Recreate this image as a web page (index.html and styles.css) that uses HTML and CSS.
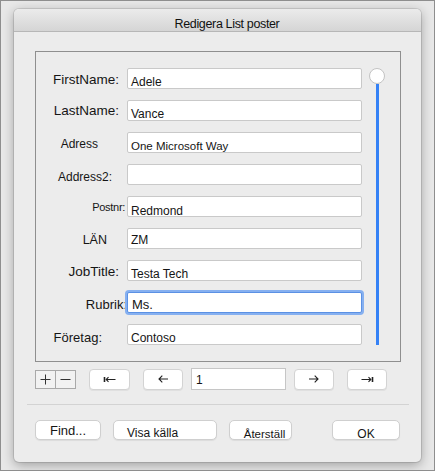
FILE: index.html
```html
<!DOCTYPE html>
<html>
<head>
<meta charset="utf-8">
<link rel="stylesheet" href="styles.css">
</head>
<body>
<div class="dialog">
  <div class="titlebar"><div class="title">Redigera List poster</div></div>
  <div class="panel">
    <div class="form">
      <div class="label l-first">FirstName:</div><div class="field">Adele</div>
      <div class="label l-last">LastName:</div><div class="field">Vance</div>
      <div class="label l-adress">Adress</div><div class="field f-small">One Microsoft Way</div>
      <div class="label l-adress2">Address2:</div><div class="field"></div>
      <div class="label l-postnr">Postnr:</div><div class="field f-low">Redmond</div>
      <div class="label l-lan">LÄN</div><div class="field f-high">ZM</div>
      <div class="label l-job">JobTitle:</div><div class="field">Testa Tech</div>
      <div class="label l-rubrik">Rubrik:</div><div class="field focused">Ms.</div>
      <div class="label l-foretag">Företag:</div><div class="field">Contoso</div>
    </div>
    <div class="slider"><div class="knob"></div><div class="track"></div></div>
  </div>
  <div class="nav">
    <div class="pm">
      <span><svg width="11" height="11" viewBox="0 0 11 11"><path d="M5.5 0.5v10M0.5 5.5h10" stroke="#333" stroke-width="1" fill="none"/></svg></span>
      <span><svg width="11" height="11" viewBox="0 0 11 11"><path d="M0.5 5.5h10" stroke="#333" stroke-width="1" fill="none"/></svg></span>
    </div>
    <div class="nbtn nb1"><svg width="13" height="7" viewBox="0 0 13 7"><path d="M1.5 1v5" stroke="#222" stroke-width="1.6" fill="none"/><path d="M3 3.5h9.5M5.5 1.2L3.2 3.5l2.3 2.3" stroke="#222" stroke-width="1.1" fill="none"/></svg></div>
    <div class="nbtn nb2"><svg width="10" height="8" viewBox="0 0 10 8"><path d="M1 4h9M4.3 0.7L1 4l3.3 3.3" stroke="#222" stroke-width="1.1" fill="none"/></svg></div>
    <div class="numfield">1</div>
    <div class="nbtn nb3"><svg width="10" height="8" viewBox="0 0 10 8"><path d="M0 4h9M5.7 0.7L9 4 5.7 7.3" stroke="#222" stroke-width="1.1" fill="none"/></svg></div>
    <div class="nbtn nb4"><svg width="13" height="7" viewBox="0 0 13 7"><path d="M11.5 1v5" stroke="#222" stroke-width="1.6" fill="none"/><path d="M0.5 3.5H10M7.5 1.2l2.3 2.3-2.3 2.3" stroke="#222" stroke-width="1.1" fill="none"/></svg></div>
  </div>
  <div class="sep"></div>
  <div class="actions">
    <div class="btn b-find">Find...</div>
    <div class="btn b-visa">Visa källa</div>
    <div class="btn b-reset">Återställ</div>
    <div class="btn b-ok">OK</div>
  </div>
</div>
</body>
</html>
```
FILE: styles.css
```css
* { box-sizing: border-box; }
html, body { margin: 0; }
body {
  width: 435px;
  height: 471px;
  border: 1px solid #8e8e8e;
  background: #e8e8e8;
  padding: 8px 0 0 13px;
  font-family: "Liberation Sans", Arial, sans-serif;
  color: #151515;
  overflow: hidden;
}
.dialog {
  width: 407px;
  height: 453px;
  background: #ececec;
  border-radius: 5px;
  box-shadow: 0 0 0 1px rgba(0,0,0,0.10), 0 3px 12px rgba(0,0,0,0.32);
  display: flex;
  flex-direction: column;
  overflow: hidden;
}
.titlebar {
  height: 23px;
  border-bottom: 1px solid #b7b7b7;
  background: linear-gradient(#ebebeb, #d5d5d5);
  padding: 8px 0 0 19px;
  text-align: center;
}
.title {
  font-size: 12.5px;
  line-height: 14px;
  letter-spacing: -0.35px;
  color: #111;
}
.panel {
  margin: 19px 0 0 21px;
  width: 366px;
  height: 311px;
  border: 1px solid #8f8f8f;
  display: flex;
  align-items: flex-start;
  padding-top: 16px;
}
.form {
  display: grid;
  grid-template-columns: 91px 235px;
  grid-auto-rows: 21px;
  row-gap: 11px;
}
.label {
  text-align: right;
  white-space: nowrap;
  font-size: 12px;
  line-height: 21px;
}
.l-first { font-size: 13.5px; padding-right: 8px; padding-top: 1px; }
.l-last { font-size: 13.5px; padding-right: 8px; }
.l-adress { padding-right: 29px; padding-top: 2px; }
.l-adress2 { padding-right: 15px; padding-top: 3px; }
.l-postnr { font-size: 11px; letter-spacing: -0.3px; padding-right: 2px; padding-top: 1px; }
.l-lan { font-size: 12.5px; padding-right: 20px; padding-top: 2px; }
.l-job { font-size: 13.5px; padding-right: 8px; padding-top: 1px; }
.l-rubrik { font-size: 13px; padding-right: 0; padding-top: 2px; }
.l-foretag { font-size: 13px; padding-right: 25px; padding-top: 2.5px; }
.field {
  height: 21px;
  background: #fff;
  border: 1px solid #c9c9c9;
  border-radius: 2px;
  font-size: 12px;
  line-height: 12px;
  padding: 7px 0 0 3px;
  overflow: hidden;
  white-space: nowrap;
}
.f-small { font-size: 11.5px; }
.f-low { padding-top: 7.5px; }
.f-high { padding-top: 5px; }
.focused {
  border-color: #5b91e4;
  box-shadow: 0 0 0 2px #86b0f0;
  font-size: 13px;
  padding-top: 5.5px;
  padding-left: 4px;
  overflow: visible;
}
.slider {
  margin-left: 7px;
  width: 16px;
  display: flex;
  flex-direction: column;
  align-items: center;
}
.knob {
  width: 16px;
  height: 16px;
  border-radius: 50%;
  background: #fff;
  border: 1px solid #c3c3c3;
}
.track {
  width: 3px;
  height: 261px;
  background: #3582f6;
}
.nav {
  margin: 6px 0 0 21px;
  height: 22px;
  display: flex;
  align-items: center;
}
.pm {
  display: flex;
  height: 19px;
  border: 1px solid #a9a9a9;
  background: #f2f2f2;
}
.pm span {
  width: 19px;
  display: flex;
  align-items: center;
  justify-content: center;
}
.pm span + span { border-left: 1px solid #a9a9a9; width: 20px; }
.nbtn {
  height: 21px;
  width: 40px;
  background: #fff;
  border: 1px solid #d3d3d3;
  border-radius: 4px;
  box-shadow: 0 1px 0 rgba(0,0,0,0.05);
  display: flex;
  align-items: center;
  justify-content: center;
}
.nb1 { margin-left: 13px; width: 41px; }
.nb2 { margin-left: 13px; }
.nb3 { margin-left: 8px; }
.nb4 { margin-left: 13px; }
.numfield {
  margin-left: 8px;
  width: 95px;
  height: 22px;
  background: #fff;
  border: 1px solid #c6c6c6;
  font-size: 12px;
  line-height: 12px;
  padding: 5px 0 0 4px;
}
.sep {
  margin: 14px 12px 0 13px;
  height: 1px;
  background: #d3d3d3;
}
.actions {
  margin: 15px 0 0 21px;
  display: flex;
}
.btn {
  height: 20px;
  background: #fff;
  border: 1px solid #cfcfcf;
  border-radius: 5px;
  box-shadow: 0 1px 1px rgba(0,0,0,0.07);
  line-height: 16px;
  text-align: center;
  white-space: nowrap;
  font-size: 12px;
}
.b-find { width: 66px; font-size: 13px; padding-top: 1.5px; }
.b-visa { width: 104px; margin-left: 12px; text-align: left; padding: 3.5px 0 0 13px; }
.b-reset { width: 63px; margin-left: 12px; font-size: 11.5px; padding: 5px 0 0 8px; }
.b-ok { width: 68px; margin-left: 40px; padding-top: 4.5px; }
```
